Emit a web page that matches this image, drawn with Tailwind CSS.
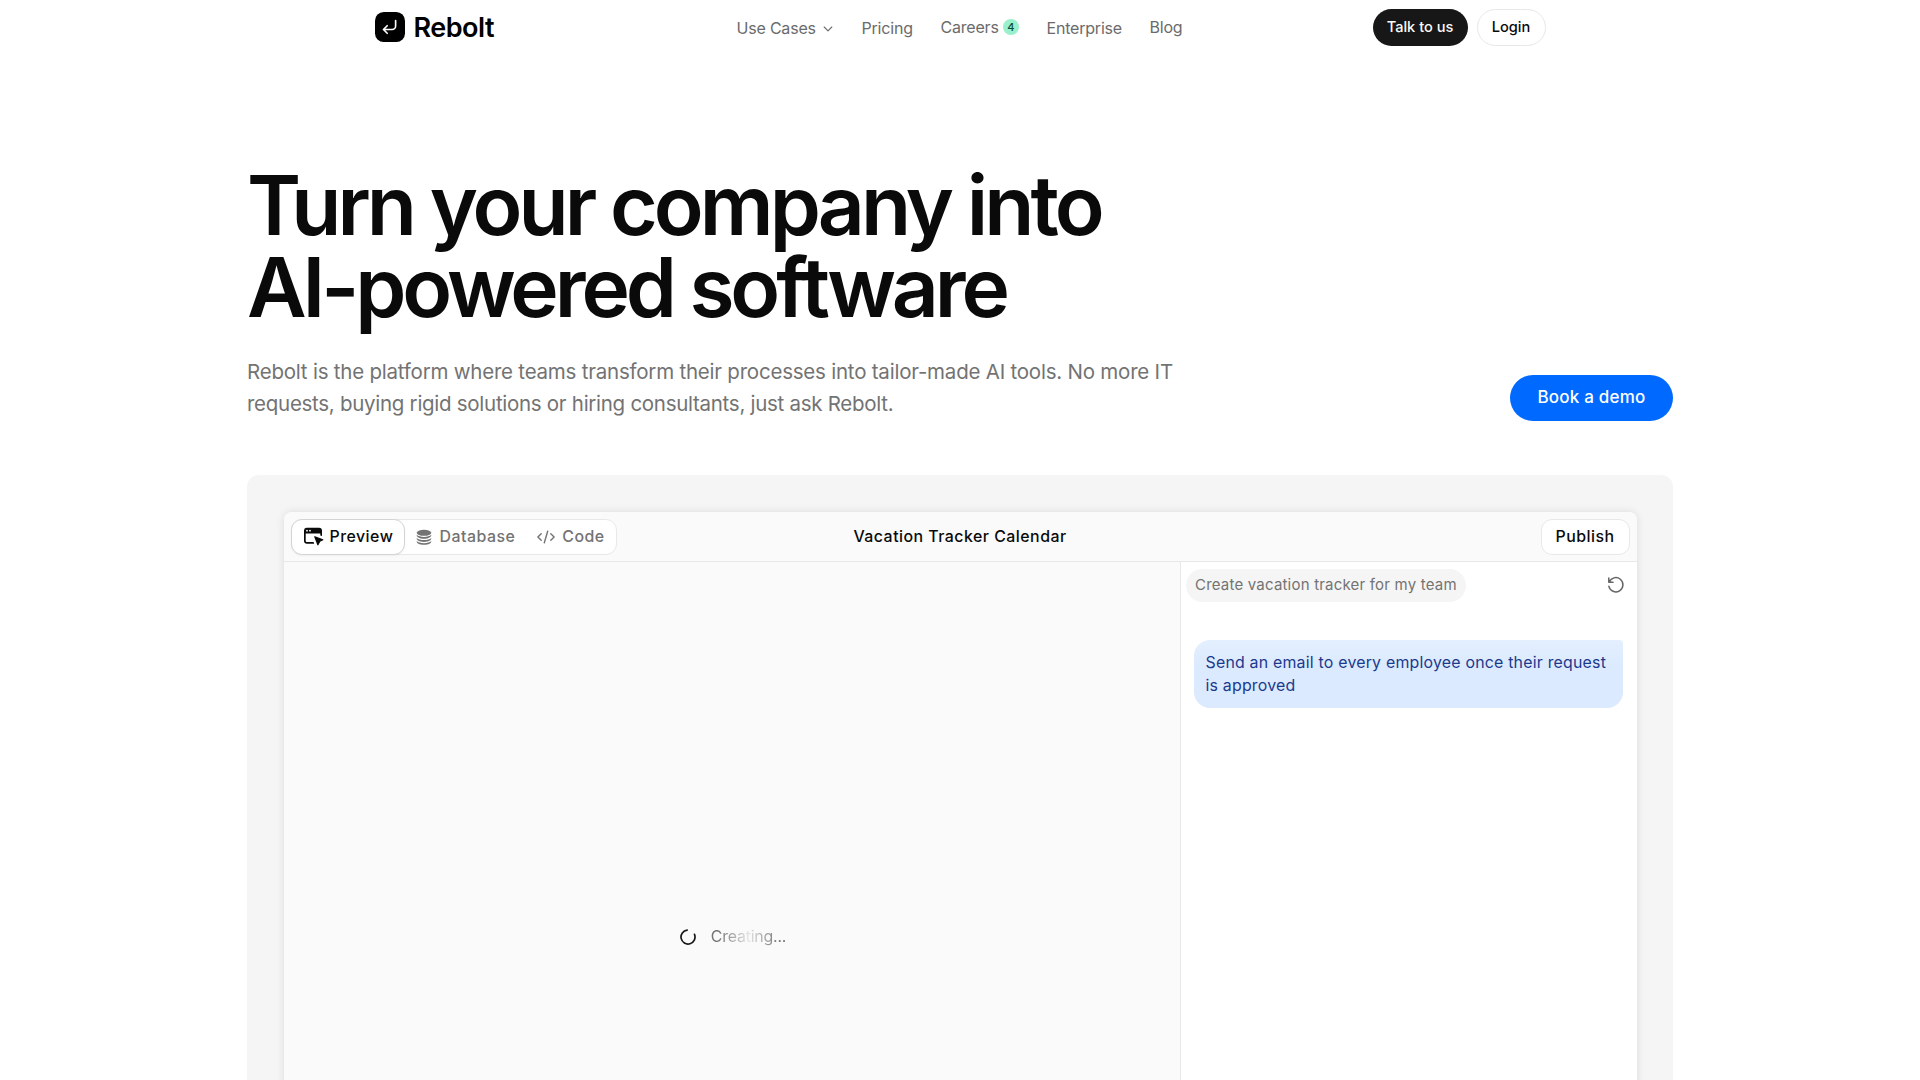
<!DOCTYPE html>
<html lang="en">
<head>
    <meta charset="UTF-8">
    <meta name="viewport" content="width=device-width, initial-scale=1.0">
    <title>Rebolt</title>
    <script src="https://cdn.jsdelivr.net/npm/@tailwindcss/browser@4"></script>
</head>
<body class="h-screen overflow-hidden bg-white font-['Inter',sans-serif] text-[#0a0a0a] antialiased">
    <!-- Header -->
    <header class="mx-auto flex h-[55px] w-[1171px] items-center">
        <a href="#" class="flex w-[362px] items-center gap-[9px] pb-px">
            <svg class="size-[30px]" viewBox="0 0 31 31" fill="none">
                <rect width="31" height="31" rx="9" fill="#000"/>
                <path d="M21.3 8.8v5.7a3.6 3.6 0 0 1-3.6 3.6H9.2M12.6 14.2l-3.9 3.9 3.9 3.9" stroke="#fff" stroke-width="1.7" stroke-linecap="round" stroke-linejoin="round"/>
            </svg>
            <span class="pt-px text-[27px] leading-none font-semibold tracking-[-0.5px] text-black">Rebolt</span>
        </a>
        <nav class="flex flex-1 items-center pb-px whitespace-nowrap text-[16px] tracking-[-0.2px] text-[#6b6b6b]">
            <a href="#" class="flex w-[125px] items-center gap-[7px] pt-0.5">Use Cases
                <svg class="mt-0.5 h-[6px] w-[10px]" viewBox="0 0 10 6" fill="none" stroke="currentColor" stroke-width="1.1" stroke-linecap="round" stroke-linejoin="round"><path d="M1.2 1 5 4.8 8.8 1"/></svg>
            </a>
            <a href="#" class="w-[79px] pt-0.5">Pricing</a>
            <a href="#" class="flex w-[106px] items-center gap-[4px]">Careers
                <span class="flex size-4 items-center justify-center rounded-full bg-[#98f0cc] text-[11px] font-medium text-[#0b4f3a]">4</span>
            </a>
            <a href="#" class="w-[103px] pt-0.5">Enterprise</a>
            <a href="#">Blog</a>
        </nav>
        <div class="flex gap-[9px] text-[14.6px] font-medium">
            <a href="#" class="flex h-[37px] w-[95px] items-center justify-center rounded-full bg-[#171717] text-[#fafafa]">Talk to us</a>
            <a href="#" class="flex h-[37px] w-[69px] items-center justify-center rounded-full border border-[#e8e8e8] bg-white">Login</a>
        </div>
    </header>

    <main class="mx-auto w-[1426px] pt-[110px]">
        <!-- Hero -->
        <h1 class="text-[82px] leading-none font-semibold tracking-[-0.05em]"><span class="tracking-[-3.95px]">Turn your company into</span><br>AI-powered software</h1>
        <div class="mt-[27px] flex items-end justify-between">
            <p class="text-[20.5px] leading-[32.4px] tracking-[-0.22px] whitespace-nowrap text-[#737373]">Rebolt is the platform where teams transform their processes into tailor-made AI tools. No more IT<br><span class="tracking-[-0.28px]">requests, buying rigid solutions or hiring consultants, just ask Rebolt.</span></p>
            <a href="#" class="flex h-[46px] w-[163px] items-center justify-center rounded-full bg-[#0069ff] text-[17px] font-medium tracking-[0.2px] text-white">Book a demo</a>
        </div>

        <!-- App demo -->
        <section class="mt-[54px] h-[900px] rounded-xl bg-[#f5f5f5] px-[36.5px] pt-[37px]">
            <div class="overflow-hidden rounded-lg bg-white shadow-[0_0_8px_rgba(0,0,0,0.11)]">
                <div class="flex h-[50px] items-center justify-between border-b border-[#e8e8e8] bg-[#fafafa] px-[7px] pt-px text-[15.9px] font-medium tracking-[0.48px]">
                    <div class="flex flex-1">
                        <div class="flex h-9 w-[326px] items-center rounded-[11px] border border-[#e8e8e8] bg-white text-[#737373]">
                            <button class="-ml-px flex h-9 w-[114px] items-center gap-[6px] rounded-[11px] border border-[#d4d4d4] bg-white pl-[11px] text-[#0a0a0a] shadow-xs">
                                <svg class="h-[19px] w-[21px] shrink-0" viewBox="0 0 21 19">
                                    <path d="M3.5.8H16a3 3 0 0 1 3 3V9l-1.700-.6V6.500H2.700v7.200c0 .9.500 1.400 1.400 1.400h6.500l.6 1.700H4a3 3 0 0 1-3-3V3.400A2.600 2.600 0 0 1 3.500.8Z" fill="currentColor"/>
                                    <circle cx="4" cy="3.700" r=".9" fill="#fff"/>
                                    <circle cx="7" cy="3.700" r=".9" fill="#fff"/>
                                    <path d="m11.800 9.700 8 3-3 1.500-1.900 3.600Z" fill="currentColor" stroke="currentColor" stroke-width="1.200" stroke-linejoin="round"/>
                                </svg>
                                Preview
                            </button>
                            <button class="ml-[11px] flex items-center gap-2">
                                <svg class="size-4" viewBox="0 0 16 16" fill="currentColor">
                                    <ellipse cx="8" cy="3.800" rx="7.300" ry="3"/>
                                    <path d="M.7 5.800c1.300 1.400 4.200 2.100 7.300 2.100s6-.7 7.300-2.100c.4 2.300-2.700 4-7.300 4s-7.700-1.700-7.300-4Z"/>
                                    <path d="M.7 9c1.300 1.400 4.200 2.100 7.300 2.100s6-.7 7.300-2.100c.4 2.300-2.700 3.900-7.300 3.900S.3 11.300.7 9Z"/>
                                    <path d="M.7 12c1.300 1.400 4.200 2.200 7.300 2.200s6-.8 7.300-2.200c.4 2.200-2.700 3.800-7.300 3.800S.3 14.200.7 12Z"/>
                                </svg>
                                Database
                            </button>
                            <button class="ml-[22px] flex items-center gap-[7px]">
                                <svg class="h-4 w-[18px]" viewBox="0 0 18 16" fill="none" stroke="currentColor" stroke-width="1.400" stroke-linecap="round" stroke-linejoin="round"><path d="M4.200 4.700.9 8l3.300 3.300M13.800 4.700 17.100 8l-3.300 3.300M10.700 2.200 7.300 13.800"/></svg>
                                Code
                            </button>
                        </div>
                    </div>
                    <h2>Vacation Tracker Calendar</h2>
                    <div class="flex flex-1 justify-end">
                        <button class="h-9 w-[89px] rounded-[11px] border border-[#e8e8e8] bg-white">Publish</button>
                    </div>
                </div>

                <div class="flex h-[750px]">
                    <div class="flex flex-1 items-center justify-center gap-[15px] border-r border-[#e8e8e8] bg-[#fafafa] pt-px pl-[3px]">
                        <svg class="size-4" viewBox="0 0 16 16" fill="none" stroke="#171717" stroke-width="1.700" stroke-linecap="round"><path d="M14.500 5.400A7 7 0 1 1 7.200 1.050"/></svg>
                        <span class="bg-linear-to-r from-[#737373] from-10% via-[#e5e5e5] via-50% to-[#737373] to-90% bg-clip-text text-[15.9px] tracking-[-0.2px] text-transparent">Creating...</span>
                    </div>

                    <!-- Chat -->
                    <div class="w-[456px]">
                        <div class="flex items-center justify-between pt-[7px] pr-3 pl-[5px]">
                            <span class="flex h-[33px] items-center rounded-full bg-[#f5f5f5] px-[9.5px] text-[15px] tracking-[0.2px] whitespace-nowrap text-[#737373]">Create vacation tracker for my team</span>
                            <svg class="size-[18px]" viewBox="0 0 18 18" fill="none" stroke="#666" stroke-width="1.500" stroke-linecap="round" stroke-linejoin="round"><path d="M1.800 2v4.200h4.200M2.200 6.200A7.100 7.100 0 1 1 1.900 10.300"/></svg>
                        </div>
                        <div class="mt-[38px] mr-[13.5px] ml-[13.5px] h-[68px] rounded-2xl rounded-tr-sm bg-[#dbeafe] bg-linear-to-b from-white/25 to-transparent to-40% px-[11.5px] py-[11px] text-[15.9px] leading-[23px] tracking-[0.21px] whitespace-nowrap text-[#1c398e]">Send an email to every employee once their request<br>is approved</div>
                    </div>
                </div>
            </div>
        </section>
    </main>
</body>
</html>
